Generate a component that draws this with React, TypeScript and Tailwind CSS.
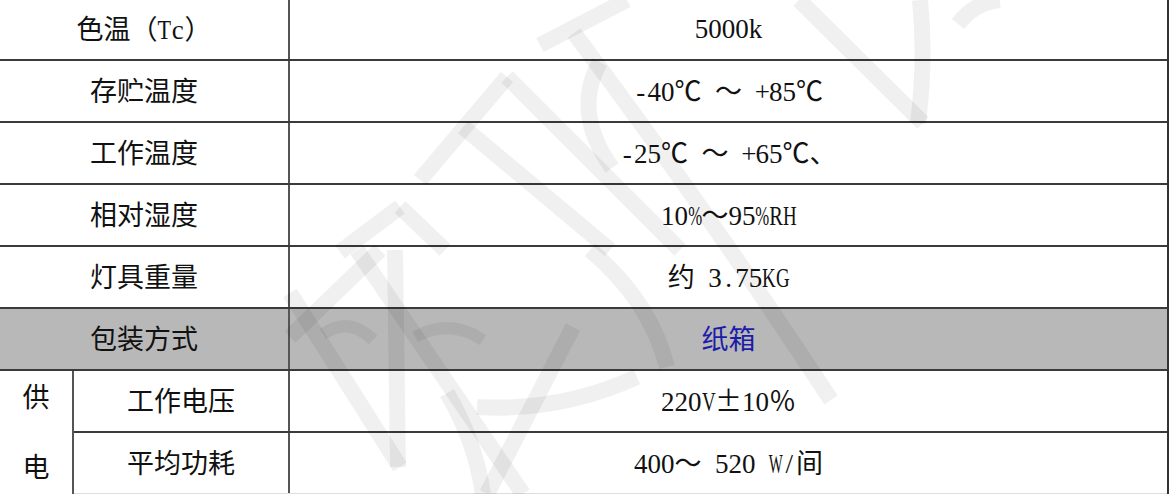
import React from 'react'

const font = { fontFamily: "'Liberation Serif', 'Noto Sans CJK SC', serif" }

// half-width glyphs get squeezed into a 0.5em cell, like the SimSun of the source doc
const squeeze: Record<string, string> = {
  '%': 'scale-x-[0.62]',
  W: 'scale-x-[0.55]',
  K: 'scale-x-[0.7]',
  G: 'scale-x-[0.7]',
  H: 'scale-x-[0.7]',
  V: 'scale-x-[0.7]',
  R: 'scale-x-[0.76]',
  T: 'scale-x-[0.82]',
}

function Mono({ text }: { text: string }) {
  return (
    <span>
      {[...text].map((c, i) =>
        c.charCodeAt(0) < 128 ? (
          <span key={i} className="inline-flex w-[0.5em] justify-center">
            {c === ' ' ? '\u00a0' : squeeze[c] ? <span className={`inline-block ${squeeze[c]}`}>{c}</span> : c}
          </span>
        ) : (
          <span key={i} style={{ fontFamily: "'Noto Sans CJK SC', sans-serif" }}>{c}</span>
        )
      )}
    </span>
  )
}

const rows = [
  { label: '色温（Tc）', value: '5000k' },
  { label: '存贮温度', value: '-40℃ ～ +85℃' },
  { label: '工作温度', value: '-25℃ ～ +65℃、' },
  { label: '相对湿度', value: '10%～95%RH' },
  { label: '灯具重量', value: '约 3.75KG' },
]

function Watermark() {
  return (
    <svg
      className="pointer-events-none absolute inset-0"
      width="1172"
      height="494"
      viewBox="0 0 1172 494"
      fill="none"
      stroke="rgba(0,0,0,0.06)"
      strokeWidth="16"
    >
      <path d="M627 0 L540 45" />
      <path d="M507 77 L680 250" />
      <path d="M463 127 L610 250" />
      <path d="M507 77 L420 180" />
      <path d="M600 62 Q572 112 612 168" />
      <path d="M400 207 L340 252" />
      <path d="M400 207 L445 250" />
      <path d="M290 293 L400 467" />
      <path d="M380 250 L290 337" />
      <path d="M357 250 L523 494" />
      <path d="M395 250 L398 467" />
      <path d="M323 334 Q350 316 373 340" strokeWidth="12" />
      <path d="M415 337 Q450 318 483 340" strokeWidth="12" />
      <path d="M573 327 L487 494" />
      <path d="M590 250 Q650 300 667 367" />
      <path d="M637 377 Q560 412 477 407" />
      <path d="M447 393 Q475 440 483 494" />
      <path d="M574 33 Q700 200 831 400" />
      <path d="M799 0 L923 123" />
      <path d="M920 0 Q926 60 918 123" />
      <path d="M958 24 Q975 2 1000 0" />
    </svg>
  )
}

function Row({ label, value, gray, blue }: { label: string; value: string; gray?: boolean; blue?: boolean }) {
  return (
    <div className={`flex h-[62px] border-b-2 border-[#3a3a3a] ${gray ? 'bg-[#b8b8b8]' : ''}`}>
      <div className="flex w-[290px] items-center justify-center border-r-2 border-[#555]">
        <Mono text={label} />
      </div>
      <div className={`flex flex-1 items-center justify-center ${blue ? 'text-[#1c1ca8]' : ''}`}>
        <Mono text={value} />
      </div>
    </div>
  )
}

export default function App() {
  return (
    <div className="relative h-[494px] w-[1172px] overflow-hidden bg-white text-[27px] text-[#111]" style={font}>
      <div className="mt-[-1px] w-[1169px] border-r-2 border-[#333]">
        {rows.map(r => (
          <Row key={r.label} label={r.label} value={r.value} />
        ))}
        <Row label="包装方式" value="纸箱" gray blue />
        <div className="flex h-[124px]">
          <div className="flex w-[74px] flex-col items-center gap-[38px] border-r-2 border-[#555] pt-[10px] leading-[30px]">
            <Mono text="供" />
            <Mono text="电" />
          </div>
          <div className="flex flex-1 flex-col">
            <div className="flex h-[62px] border-b-2 border-[#3a3a3a]">
              <div className="flex w-[216px] items-center justify-center border-r-2 border-[#555]">
                <Mono text="工作电压" />
              </div>
              <div className="flex flex-1 items-center justify-center">
                <Mono text="220V±10％" />
              </div>
            </div>
            <div className="flex h-[62px] border-b-2 border-[#ddd]">
              <div className="flex w-[216px] items-center justify-center border-r-2 border-[#555]">
                <Mono text="平均功耗" />
              </div>
              <div className="flex flex-1 items-center justify-center">
                <Mono text="400～ 520 W/间" />
              </div>
            </div>
          </div>
        </div>
      </div>
      <Watermark />
    </div>
  )
}
